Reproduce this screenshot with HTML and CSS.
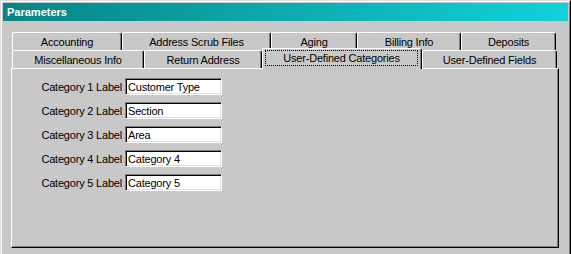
FILE: index.html
```html
<!DOCTYPE html>
<html lang="en">
<head>
  <meta charset="UTF-8">
  <title>Parameters</title>
  <link rel="stylesheet" href="styles.css">
</head>
<body>
  <div class="window">
    <div class="frame">
      <div class="titlebar">Parameters</div>

      <div class="content">
        <div class="tabs">
          <div class="tab-row">
            <div class="tab tab-accounting">Accounting</div>
            <div class="tab tab-scrub">Address Scrub Files</div>
            <div class="tab tab-aging">Aging</div>
            <div class="tab tab-billing">Billing Info</div>
            <div class="tab tab-deposits">Deposits</div>
          </div>
          <div class="tab-row front">
            <div class="tab tab-misc">Miscellaneous Info</div>
            <div class="tab tab-return">Return Address</div>
            <div class="tab tab-categories selected"><span class="focus">User-Defined Categories</span></div>
            <div class="tab tab-fields">User-Defined Fields</div>
          </div>
        </div>

        <div class="panel">
          <div class="form">
            <label class="field-label" for="cat1">Category 1 Label</label>
            <input type="text" id="cat1" class="field" value="Customer Type">
            <label class="field-label" for="cat2">Category 2 Label</label>
            <input type="text" id="cat2" class="field" value="Section">
            <label class="field-label" for="cat3">Category 3 Label</label>
            <input type="text" id="cat3" class="field" value="Area">
            <label class="field-label" for="cat4">Category 4 Label</label>
            <input type="text" id="cat4" class="field" value="Category 4">
            <label class="field-label" for="cat5">Category 5 Label</label>
            <input type="text" id="cat5" class="field" value="Category 5">
          </div>
        </div>
      </div>
    </div>
  </div>
</body>
</html>
```

FILE: styles.css
```css
html, body {
  margin: 0;
  padding: 0;
  height: 254px;
  overflow: hidden;
}

body {
  font-family: 'Liberation Sans', Arial, sans-serif;
  font-size: 11px;
  letter-spacing: -0.2px;
  color: #000;
  background: #c8c8c8;
}

* {
  box-sizing: border-box;
}

.window {
  width: 571px;
  height: 264px;
  border: 1px solid;
  border-color: #dfdfdf #000 #000 #dfdfdf;
  background: #c8c8c8;
}

.frame {
  height: 100%;
  border: 1px solid;
  border-color: #fff #808080 #808080 #fff;
  padding: 1px;
}

.titlebar {
  height: 18px;
  line-height: 18px;
  padding-left: 4px;
  font-weight: bold;
  letter-spacing: 0;
  color: #fff;
  background: linear-gradient(to right, #088484, #10d2da);
}

.content {
  padding: 11px 9px 0 8px;
}

/* tabs */
.tab-row {
  display: flex;
  align-items: flex-end;
  padding-left: 1px;
}

.tab {
  height: 18px;
  line-height: 16px;
  padding-top: 1px;
  text-align: center;
  white-space: nowrap;
  background: #c8c8c8;
  border-top: 1px solid #fff;
  border-left: 1px solid #fff;
  border-right: 1px solid #000;
  border-radius: 2px 3px 0 0;
  box-shadow: inset -1px 0 #808080;
}

.tab-accounting { width: 110px; }
.tab-scrub { width: 149px; }
.tab-aging { width: 86px; }
.tab-billing { width: 104px; }
.tab-deposits { width: 95px; }

.tab-misc { width: 132px; }
.tab-return { width: 118px; }
.tab-categories { width: 160px; }
.tab-fields { width: 135px; }

.tab.selected {
  position: relative;
  z-index: 1;
  height: 21px;
  margin-top: -2px;
  margin-bottom: -1px;
  padding: 1px 3px 0 2px;
  line-height: 14px;
}

.focus {
  display: block;
  height: 16px;
  border: 1px dotted #000;
}

/* panel */
.panel {
  height: 180px;
  border: 1px solid;
  border-color: #fff #000 #000 #fff;
  box-shadow: inset -1px -1px #808080;
  padding: 9px 0 0 2px;
}

.form {
  display: grid;
  grid-template-columns: 108px 97px;
  column-gap: 3px;
  row-gap: 7px;
  align-items: center;
}

.field-label {
  text-align: right;
  white-space: nowrap;
}

.field {
  width: 97px;
  height: 17px;
  margin: 0;
  padding: 0 0 0 2px;
  font-family: 'Liberation Sans', Arial, sans-serif;
  font-size: 11px;
  letter-spacing: -0.2px;
  color: #000;
  background: #fff;
  border: 1px solid;
  border-color: #808080 #fff #fff #808080;
  box-shadow: inset 1px 1px #000, inset -1px -1px #dfdfdf;
  outline: none;
}
```
